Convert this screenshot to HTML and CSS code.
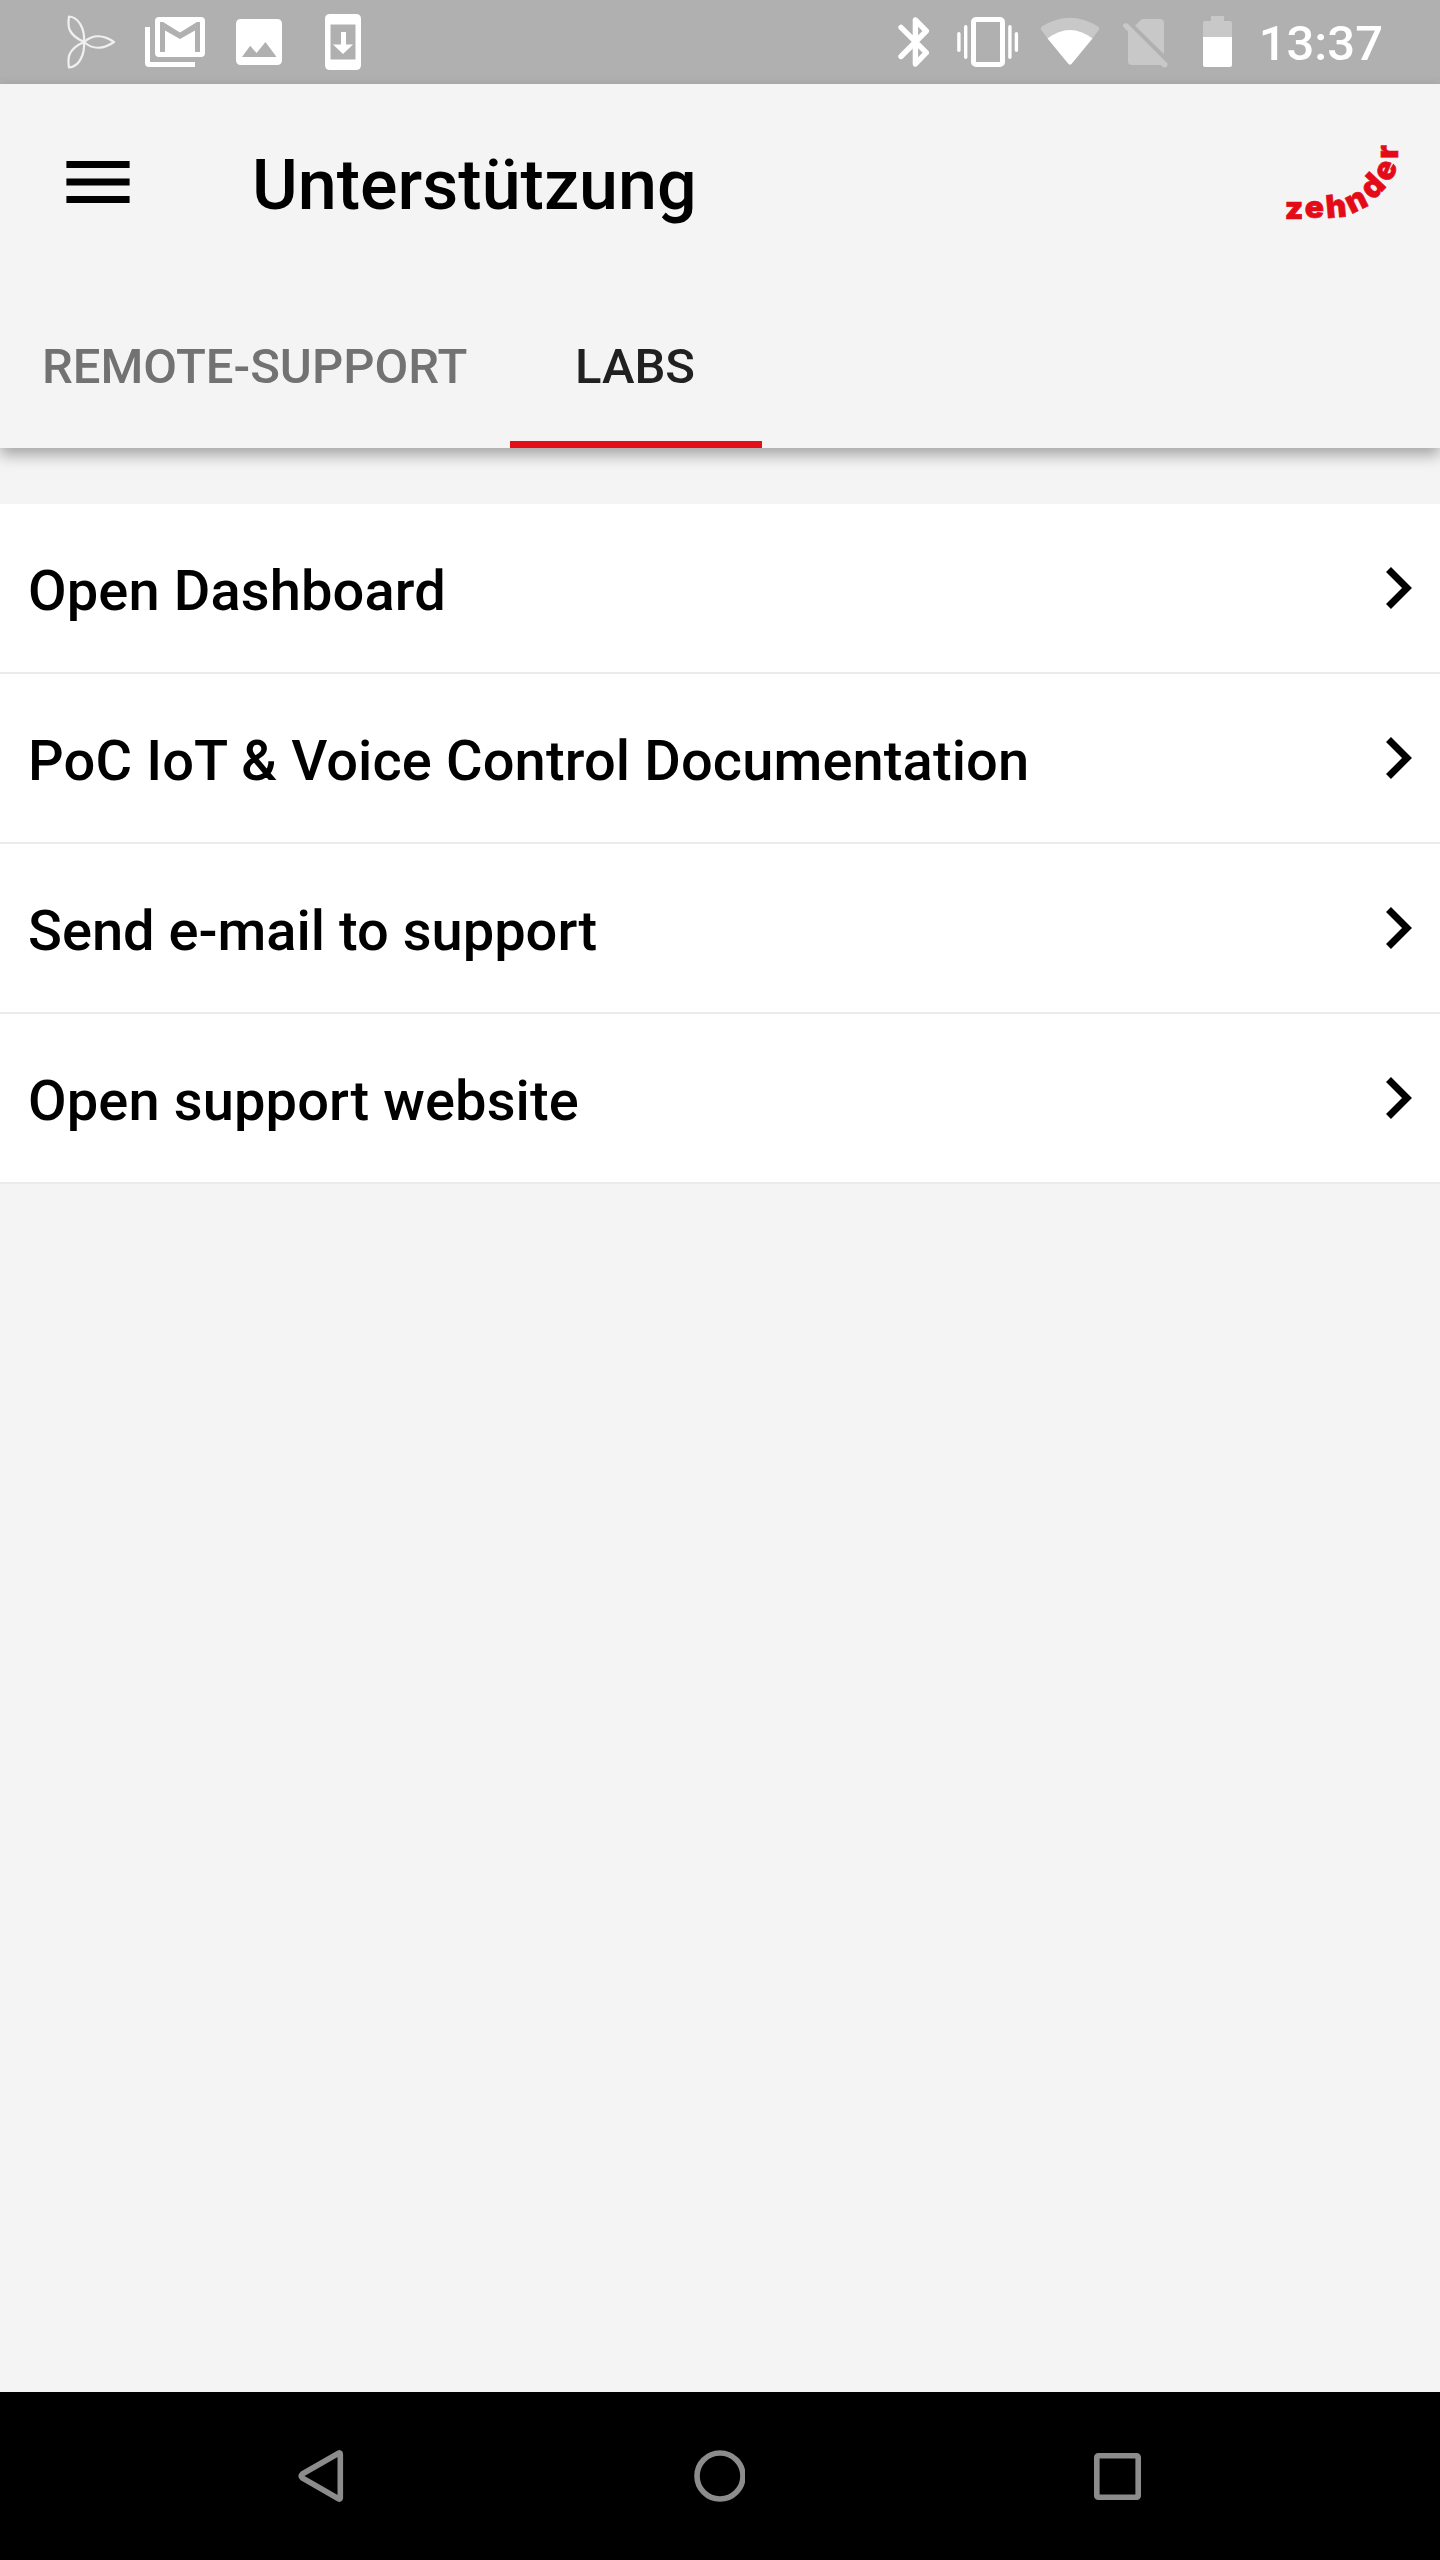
FILE: index.html
```html
<!DOCTYPE html>
<html lang="de">
<head>
<meta charset="utf-8">
<title>Unterstützung</title>
<link rel="stylesheet" href="styles.css">
</head>
<body>
<div class="screen">
  <div class="status">
    <svg class="notifications" width="300" height="84" viewBox="65 0 300 84">
      <g class="trefoil">
        <path d="M84 42C93 34 104 35 114 42C104 49 93 50 84 42Z"/>
        <path d="M84 42C66 34 68 24 69 16.500C78 17 85 28 84 42Z"/>
        <path d="M84 42C66 50 68 60 69 67.500C78 67 85 56 84 42Z"/>
      </g>
      <path d="M145 27h5v35h45v5h-46q-4 0-4-4zM159 17h42q4 0 4 4v32q0 4-4 4h-42q-4 0-4-4V21q0-4 4-4zM160 22v30h5V30.500l15 8.500 15-8.500V52h5V22h-3l-17 10.500L163 22z" fill-rule="evenodd"/>
      <path d="M241 19h36q5 0 5 5v36q0 5-5 5h-36q-5 0-5-5V24q0-5 5-5zM242 57h34.500l-11-15-9 11-6.300-7.300z" fill-rule="evenodd"/>
      <path d="M330 14h26q5 0 5 5v46q0 5-5 5h-26q-5 0-5-5V19q0-5 5-5zM330.500 24.500v35h25v-35zM341 32h5v12.500h7l-10 9.500-10-9.500h8z" fill-rule="evenodd"/>
    </svg>
    <svg class="system" width="335" height="84" viewBox="898 0 335 84">
      <path class="line" d="M901 27.300L926.300 52.700 915.400 64V20L926.300 31 901 56.500"/>
      <rect class="frame" x="973.500" y="19.500" width="29" height="45" rx="2.500"/>
      <rect x="957.200" y="32" width="3.400" height="20" rx="1.700"/>
      <rect x="964" y="25" width="3.400" height="34" rx="1.700"/>
      <rect x="1008.200" y="25" width="3.400" height="34" rx="1.700"/>
      <rect x="1014.700" y="32" width="3.400" height="20" rx="1.700"/>
      <path class="dim" d="M1041 29.500Q1040 28 1042 26.500Q1070 9 1098 26.500Q1100 28 1099 29.500L1092.500 38.500H1047.500z"/>
      <path d="M1047.500 38.500Q1070 21.500 1092.500 38.500L1071.500 64Q1070 65.500 1068.500 64z"/>
      <path class="dim" d="M1135 25.700L1142 19H1160q4 0 4 4V54zM1122.800 26.500Q1123 22 1127.500 23.500L1167.500 63.500Q1168 68 1163.500 67.500L1161 65H1132q-4 0-4-4V31.500z"/>
      <path class="dim" d="M1211 16h13v5h6q2 0 2 2v14h-29V23q0-2 2-2h6z"/>
      <path d="M1203 37h29v28q0 2-2 2h-25q-2 0-2-2z"/>
    </svg>
    <span class="clock">13:37</span>
  </div>
  <header class="header">
    <div class="toolbar">
      <svg class="menu" width="64" height="42" viewBox="0 0 64 42"><path d="M.4 0h63.200v7H.4zM.4 17.500h63.200v7H.4zM.4 35h63.200v7H.4z"/></svg>
      <h1 class="title">Unterstützung</h1>
      <svg class="logo" width="150" height="110" viewBox="0 0 450 330">
        <text transform="translate(72 240)" y="26">z</text>
        <text transform="translate(133 238)" y="26">e</text>
        <text transform="translate(199 236) rotate(-5)" y="26">h</text>
        <text transform="translate(260 216) rotate(-26)" y="26">n</text>
        <text transform="translate(312 173) rotate(-47)" y="26">d</text>
        <text transform="translate(350 122) rotate(-68)" y="26">e</text>
        <text transform="translate(358 66) rotate(-90)" y="26">r</text>
      </svg>
    </div>
    <nav class="tabs">
      <a class="tab">REMOTE-SUPPORT</a>
      <a class="tab active">LABS</a>
    </nav>
  </header>
  <main class="content">
    <ul class="list">
      <li class="row"><span class="label looser">Open Dashboard</span><svg class="chevron" width="26" height="42" viewBox="0 0 26 42"><path d="M2.500 2.500L21 21 2.500 39.500"/></svg></li>
      <li class="row"><span class="label looser">PoC IoT &amp; Voice Control Documentation</span><svg class="chevron" width="26" height="42" viewBox="0 0 26 42"><path d="M2.500 2.500L21 21 2.500 39.500"/></svg></li>
      <li class="row"><span class="label">Send e-mail to support</span><svg class="chevron" width="26" height="42" viewBox="0 0 26 42"><path d="M2.500 2.500L21 21 2.500 39.500"/></svg></li>
      <li class="row"><span class="label looser">Open support website</span><svg class="chevron" width="26" height="42" viewBox="0 0 26 42"><path d="M2.500 2.500L21 21 2.500 39.500"/></svg></li>
    </ul>
  </main>
  <footer class="navbar">
    <svg width="46" height="52" viewBox="0 0 46 52"><path d="M4.300 24L40.500 3.200Q42.300 2.300 42.300 4V48Q42.300 49.700 40.500 48.800L4.300 28Q2 26 4.300 24Z"/></svg>
    <svg width="52" height="52" viewBox="0 0 52 52"><circle cx="27" cy="26" r="23"/></svg>
    <svg width="48" height="47" viewBox="0 0 48 47"><rect x="2.800" y="2.800" width="41.400" height="41.400" rx="1.500"/></svg>
  </footer>
</div>
</body>
</html>
```
FILE: styles.css
```css
* { box-sizing: border-box; }
body { margin: 0; font-family: Roboto, sans-serif; font-weight: 500; color: #000; }
svg { display: block; flex: none; }
.screen { width: 1440px; height: 2560px; display: flex; flex-direction: column; background: #f4f4f4; }

.status { height: 84px; display: flex; align-items: center; padding: 0 57px 0 65px; background: #b0b0b0; color: #fff; fill: #fff; }
.system { margin-left: auto; }
.trefoil { fill: none; stroke: #f0f0f0; stroke-width: 2.2; stroke-linejoin: round; }
.line { fill: none; stroke: #fff; stroke-width: 5.4; stroke-linecap: round; stroke-linejoin: round; }
.frame { fill: none; stroke: #fff; stroke-width: 5; }
.dim { fill: #c8c8c8; }
.clock { margin-left: 26px; padding-top: 3px; font-size: 49px; line-height: 57px; }

.header { height: 364px; position: relative; background: #f4f4f4; box-shadow: 0 7px 14px rgba(0, 0, 0, .33); }
.toolbar { height: 196px; display: flex; align-items: center; padding: 0 20px 0 66px; }
.title { margin: 5px 0 0 122px; font-size: 70px; line-height: 82px; font-weight: 500; }
.logo { margin: 6px 0 0 auto; fill: #e30b17; stroke: #e30b17; stroke-width: 2; font: 900 95px Inter, sans-serif; text-anchor: middle; }
.tabs { height: 168px; display: flex; }
.tab { width: 510px; padding: 58px 42px 0; font-size: 49px; line-height: 57px; color: #727272; }
.active { width: 252px; padding-right: 43px; padding-left: 41px; text-align: center; color: #212121; border-bottom: 7px solid #e40f18; }

.content { flex: 1; padding-top: 56px; }
.list { margin: 0; padding: 0; list-style: none; background: #fff; }
.row { height: 170px; display: flex; align-items: center; justify-content: space-between; padding: 0 28px; font-size: 56px; line-height: 66px; border-bottom: 2px solid #ebebeb; }
.label { padding-top: 6px; }
.looser { letter-spacing: .13px; }
.chevron { fill: none; stroke: #000; stroke-width: 7; }

.navbar { height: 168px; display: flex; align-items: center; justify-content: space-between; padding: 0 298px; background: #000; fill: none; stroke: #8c8c8c; stroke-width: 5.6; }
```
